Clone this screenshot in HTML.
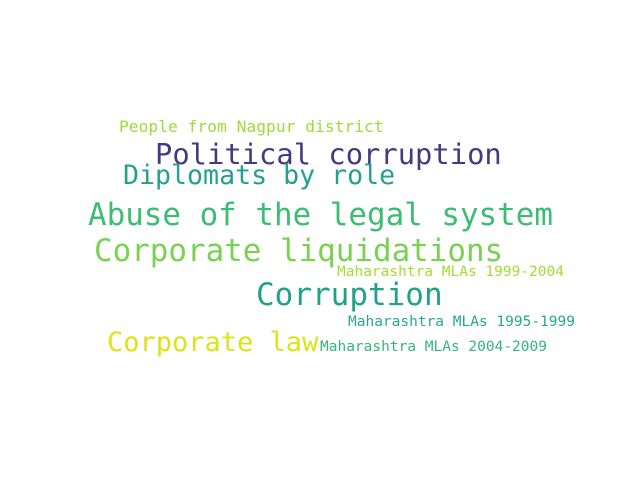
<!DOCTYPE html>
<html><head><meta charset="utf-8"><style>
html,body{margin:0;padding:0;background:#fff;width:640px;height:480px;overflow:hidden}
div{position:absolute;white-space:nowrap;font-family:"DejaVu Sans Mono","Liberation Mono",monospace;line-height:1}
</style></head><body>
<div style="left:119px;top:119px;font-size:16.3px;color:#9fda3a">People from Nagpur district</div>
<div style="left:155px;top:140px;font-size:28.8px;color:#443983">Political corruption</div>
<div style="left:123px;top:163px;font-size:26.6px;color:#25a08d">Diplomats by role</div>
<div style="left:88px;top:200px;font-size:30.9px;color:#3dbc74">Abuse of the legal system</div>
<div style="left:94px;top:236px;font-size:30.9px;color:#7ad151">Corporate liquidations</div>
<div style="left:337px;top:265px;font-size:14.5px;color:#a5db36">Maharashtra MLAs 1999-2004</div>
<div style="left:256px;top:280px;font-size:31px;color:#1fa287">Corruption</div>
<div style="left:348px;top:315px;font-size:14.5px;color:#26a98b">Maharashtra MLAs 1995-1999</div>
<div style="left:107px;top:329px;font-size:27px;color:#dde318">Corporate law</div>
<div style="left:320px;top:340px;font-size:14.5px;color:#35b779">Maharashtra MLAs 2004-2009</div>
</body></html>
